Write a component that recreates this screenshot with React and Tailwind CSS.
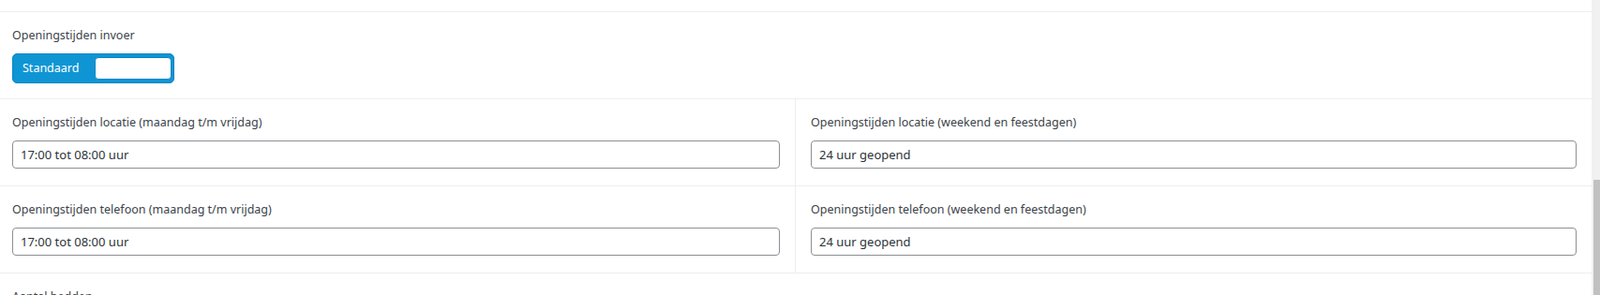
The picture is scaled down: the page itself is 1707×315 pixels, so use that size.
import React from "react";

const ROWS = [
  [
    { label: "Openingstijden locatie (maandag t/m vrijdag)", value: "17:00 tot 08:00 uur" },
    { label: "Openingstijden locatie (weekend en feestdagen)", value: "24 uur geopend" },
  ],
  [
    { label: "Openingstijden telefoon (maandag t/m vrijdag)", value: "17:00 tot 08:00 uur" },
    { label: "Openingstijden telefoon (weekend en feestdagen)", value: "24 uur geopend" },
  ],
];

function FieldLabel({ children }) {
  return <div className="mb-[9px] h-[20px] text-[12.5px] leading-[20px] text-[#3c434a]">{children}</div>;
}

function TextField({ label, value, className }) {
  return (
    <div className={`pt-[15px] pb-[18px] ${className}`}>
      <FieldLabel>{label}</FieldLabel>
      <input
        type="text"
        defaultValue={value}
        className="block h-[30px] w-full rounded-[4px] border border-[#8c8f94] bg-white px-[8px] text-[13px] text-[#2c3338] outline-none"
      />
    </div>
  );
}

export default function App() {
  return (
    <div className="flex h-[315px] w-full overflow-hidden bg-white" style={{ fontFamily: '"Noto Sans", "Open Sans", sans-serif' }}>
      <div className="flex-1">
        <div className="h-[13px] border-b border-[#eeeeee]" />

        <div className="border-b border-[#eeeeee] pl-[13px] pt-[15px] pb-[16px]">
          <FieldLabel>Openingstijden invoer</FieldLabel>
          <div className="flex h-[32px] w-[173px] items-center rounded-[5px] border border-[#0a85c2] bg-[#0f95d4] pl-[10px] pr-[2px]">
            <span className="flex-1 text-[12.5px] text-white">Standaard</span>
            <span className="h-[24px] w-[82px] rounded-[4px] border border-[#0b86c4] bg-white" />
          </div>
        </div>

        {ROWS.map((row) => (
          <div key={row[0].label} className="grid grid-cols-[848px_1fr] border-b border-[#eeeeee]">
            <TextField {...row[0]} className="pl-[13px] pr-[16px]" />
            <TextField {...row[1]} className="border-l border-[#eeeeee] pl-[16px] pr-[16px]" />
          </div>
        ))}

        <div className="pl-[13px] pt-[15px]">
          <FieldLabel>Aantal bedden</FieldLabel>
        </div>
      </div>

      <div className="flex w-[9px] flex-col bg-[#f1f1f1]">
        <div className="h-[192px]" />
        <div className="ml-[2px] flex-1 bg-[#c1c1c1]" />
      </div>
    </div>
  );
}
